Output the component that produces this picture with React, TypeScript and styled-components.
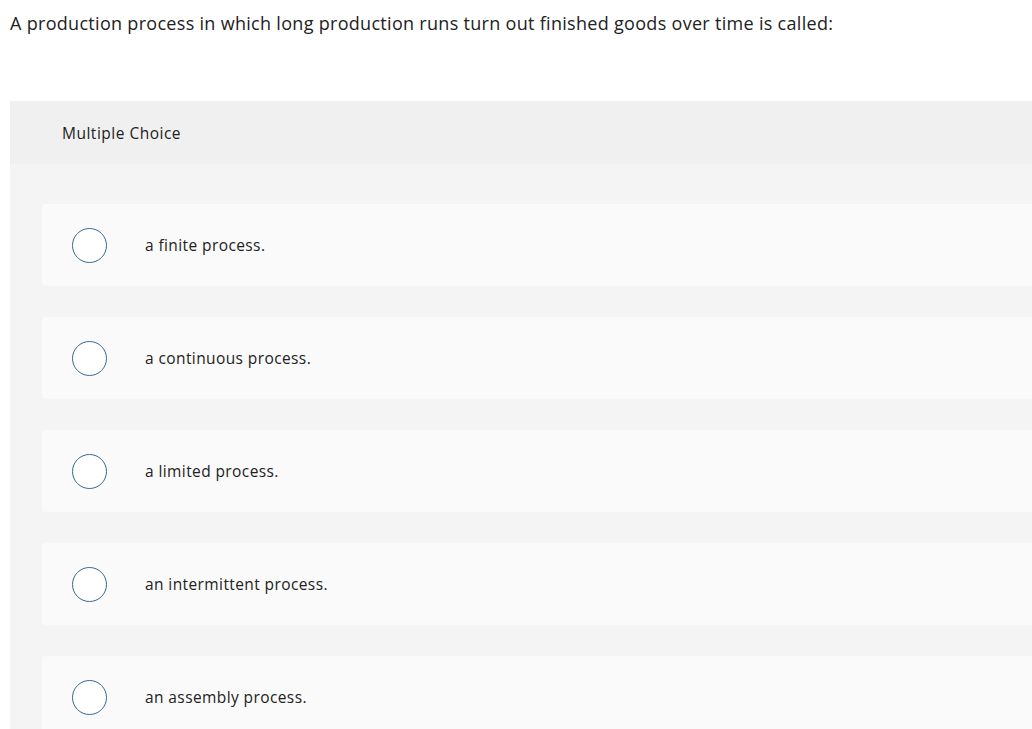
import React from "react";
import styled, { createGlobalStyle } from "styled-components";

const Global = createGlobalStyle`
  html, body { margin: 0; padding: 0; background: #fff; overflow: hidden; }
  body { font-family: "Open Sans", Lato, Arial, sans-serif; color: #1f1f1f; }
`;

const Page = styled.div`
  width: 1032px;
  height: 729px;
  overflow: hidden;
  padding-left: 10px;
  box-sizing: border-box;
`;

const Question = styled.p`
  margin: 0;
  padding-top: 11px;
  font-size: 18px;
  letter-spacing: 0.3px;
  line-height: 24px;
  color: #222;
`;

const Card = styled.section`
  margin-top: 66px;
  width: 1060px;
  background: #f4f4f4;
  border-radius: 3px 0 0 0;
`;

const Header = styled.div`
  height: 63px;
  background: #f0f0f0;
  display: flex;
  align-items: center;
  padding-left: 52px;
  font-size: 15.5px;
  letter-spacing: 0.5px;
  color: #222;
`;

const List = styled.div`
  display: flex;
  flex-direction: column;
  gap: 31px;
  padding: 40px 0 40px 32px;
`;

const Option = styled.label`
  height: 82px;
  background: #fafafa;
  border-radius: 4px;
  display: flex;
  align-items: center;
  padding-left: 30px;
  font-size: 15.5px;
  letter-spacing: 0.4px;
  color: #222;
`;

const Radio = styled.span`
  width: 33px;
  height: 33px;
  border: 1.5px solid #3b6796;
  border-radius: 50%;
  background: #fff;
  flex: none;
  margin-right: 38px;
`;

const options = [
  "a finite process.",
  "a continuous process.",
  "a limited process.",
  "an intermittent process.",
  "an assembly process.",
];

export default function App() {
  return (
    <Page>
      <Global />
      <Question>
        A production process in which long production runs turn out finished goods over time is called:
      </Question>
      <Card>
        <Header>Multiple Choice</Header>
        <List>
          {options.map((o) => (
            <Option key={o}>
              <Radio />
              {o}
            </Option>
          ))}
        </List>
      </Card>
    </Page>
  );
}
